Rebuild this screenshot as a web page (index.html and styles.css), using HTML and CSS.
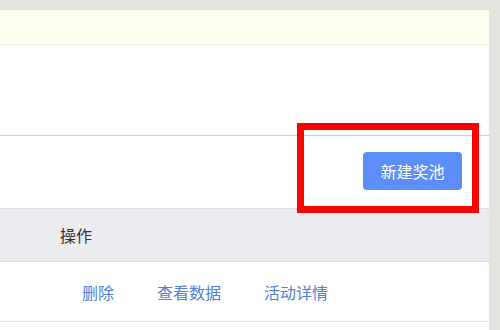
FILE: index.html
```html
<!DOCTYPE html>
<html lang="zh">
<head>
<meta charset="utf-8">
<link rel="stylesheet" href="styles.css">
</head>
<body>
<div class="frame">
  <div class="notice"></div>
  <div class="blank"></div>
  <div class="toolbar">
    <button class="btn-primary">新建奖池</button>
    <div class="highlight"></div>
  </div>
  <div class="table">
    <div class="thead"><span class="th">操作</span></div>
    <div class="row">
      <a class="link">删除</a>
      <a class="link">查看数据</a>
      <a class="link">活动详情</a>
    </div>
  </div>
</div>
</body>
</html>
```

FILE: styles.css
```css
html, body {
  margin: 0;
  padding: 0;
  height: 330px;
  overflow: hidden;
}
body {
  background: #e4e3de;
  font-family: "Noto Sans CJK SC", "Noto Sans", sans-serif;
}
.frame {
  margin-top: 10px;
  margin-right: 11px;
  height: 320px;
  background: #ffffff;
  border-top-left-radius: 3px;
}
.notice {
  height: 34px;
  background: #fffff0;
  border-bottom: 1px solid #efeee2;
  border-top-left-radius: 3px;
}
.blank {
  height: 90px;
  border-bottom: 1px solid #cccccc;
}
.toolbar {
  position: relative;
  height: 72px;
  display: flex;
  justify-content: flex-end;
  align-items: flex-start;
  padding-top: 16px;
  padding-right: 27px;
  box-sizing: border-box;
}
.btn-primary {
  width: 99px;
  height: 38px;
  border: none;
  border-radius: 4px;
  background: #5b8ef8;
  color: #ffffff;
  font-family: inherit;
  font-size: 16px;
  padding: 0;
}
.highlight {
  position: absolute;
  left: 297px;
  top: -13px;
  width: 168px;
  height: 76px;
  border: 7px solid #ff0000;
}
.table {
  border-top: 1px solid #dcdde0;
}
.thead {
  height: 52px;
  background: #ebecef;
  border-bottom: 1px solid #dcdde0;
  display: flex;
  align-items: center;
  padding-left: 60px;
}
.th {
  font-size: 16px;
  color: #333333;
}
.row {
  height: 59px;
  border-bottom: 1px solid #e4e5e8;
  display: flex;
  align-items: center;
  padding-left: 82px;
  gap: 43px;
}
.link {
  font-size: 16px;
  color: #4f80d5;
  cursor: pointer;
}
```
